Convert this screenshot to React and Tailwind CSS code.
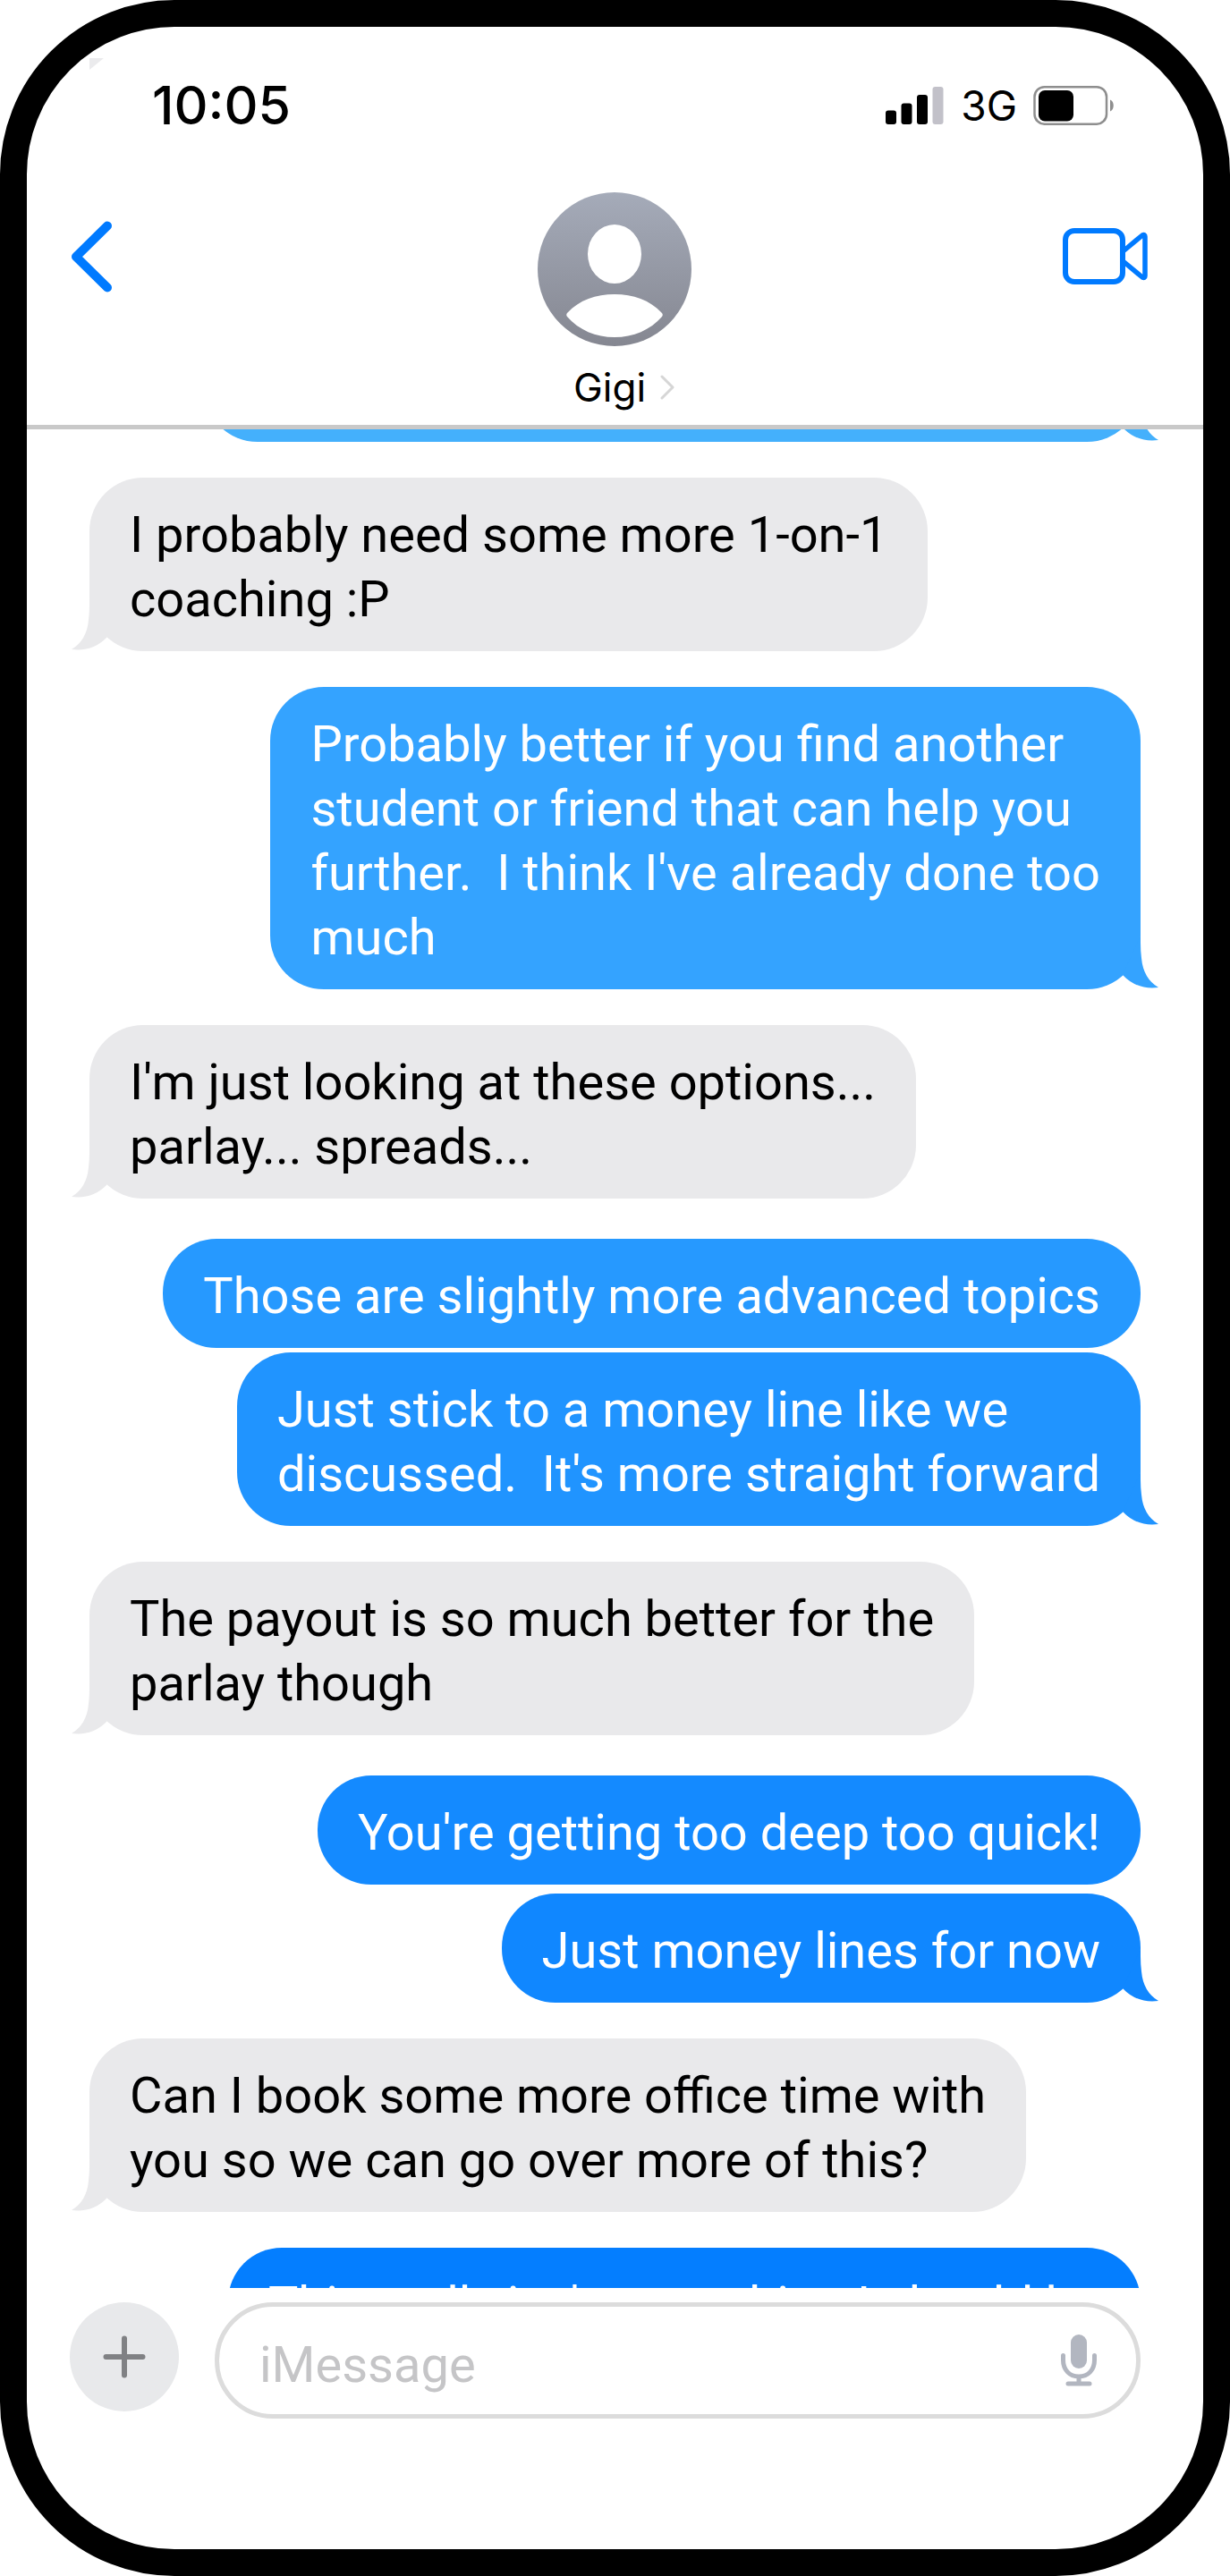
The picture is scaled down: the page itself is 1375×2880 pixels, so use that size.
import React, { useState } from 'react';
import { clsx } from 'clsx';

const messages = [
  { id: 1, mine: true, tail: true, className: '-mt-[108px] text-[#44b0fc]', text: 'Let me know how the first one goes ok' },
  { id: 2, mine: false, tail: true, className: 'mt-10', text: 'I probably need some more 1-on-1\ncoaching :P' },
  {
    id: 3,
    mine: true,
    tail: true,
    className: 'mt-10 text-[#34a3ff]',
    text: "Probably better if you find another\nstudent or friend that can help you\nfurther.  I think I've already done too\nmuch",
  },
  { id: 4, mine: false, tail: true, className: 'mt-10', text: "I'm just looking at these options...\nparlay... spreads..." },
  { id: 5, mine: true, tail: false, className: 'mt-[45px] text-[#2699ff]', text: 'Those are slightly more advanced topics' },
  {
    id: 6,
    mine: true,
    tail: true,
    className: 'mt-[5px] text-[#2094ff]',
    text: "Just stick to a money line like we\ndiscussed.  It's more straight forward",
  },
  { id: 7, mine: false, tail: true, className: 'mt-10', text: 'The payout is so much better for the\nparlay though' },
  { id: 8, mine: true, tail: false, className: 'mt-[45px] text-[#148aff]', text: "You're getting too deep too quick!" },
  { id: 9, mine: true, tail: true, className: 'mt-2.5 text-[#1087ff]', text: 'Just money lines for now' },
  { id: 10, mine: false, tail: true, className: 'mt-10', text: 'Can I book some more office time with\nyou so we can go over more of this?' },
  { id: 11, mine: true, tail: false, className: 'mt-10 text-[#047eff]', text: "This really isn't something I should be" },
];

const SignalIcon = () => (
  <svg viewBox="0 0 66 44" className="h-11 w-[66px]" aria-hidden="true">
    <rect x="0" y="27.5" width="12" height="15.5" rx="3" />
    <rect x="17.5" y="19.5" width="12" height="23.5" rx="3" />
    <rect x="35" y="10" width="12" height="33" rx="3" />
    <rect x="52.5" y="1" width="12" height="42" rx="3" fill="#c2c1c9" />
  </svg>
);

const BatteryIcon = () => (
  <svg viewBox="0 0 92 46" className="h-[46px] w-[92px]" aria-hidden="true">
    <rect x="1.5" y="2.2" width="80.5" height="41.5" rx="11" fill="none" stroke="#8e8e8e" strokeWidth="2.5" />
    <rect x="6" y="6" width="39" height="34.5" rx="7" />
    <path d="M86 16.500c5 1.500 5 11.500 0 13z" fill="#8e8e8e" />
  </svg>
);

const BackIcon = () => (
  <svg viewBox="0 0 46 80" className="h-20 w-[46px]" aria-hidden="true">
    <path d="M41 5.500L6 40l35 34.500" fill="none" stroke="#007aff" strokeWidth="10" strokeLinecap="round" strokeLinejoin="round" />
  </svg>
);

const VideoIcon = () => (
  <svg viewBox="0 0 96 64" className="h-16 w-24" fill="none" stroke="#007aff" strokeWidth="6" strokeLinejoin="round" aria-hidden="true">
    <rect x="3" y="3" width="64" height="57" rx="10" />
    <path d="M68 25.500L89 8q3-1.500 3 1.500v44q0 3-3 1.500L68 37.500" strokeWidth="5.500" />
  </svg>
);

const Avatar = () => (
  <svg viewBox="0 0 172 172" className="size-43" aria-hidden="true">
    <defs>
      <linearGradient id="avatarFill" x1="0" y1="0" x2="0" y2="1">
        <stop offset="0" stopColor="#a5abb9" />
        <stop offset="1" stopColor="#858791" />
      </linearGradient>
    </defs>
    <circle cx="86" cy="86" r="86" fill="url(#avatarFill)" />
    <ellipse cx="86" cy="69" rx="30" ry="33" fill="#fff" />
    <path d="M33 139c-1-1-1-3 0-4 14-15 32-21 53-21s39 6 53 21c1 1 1 3 0 4-13 15-32 23-53 23s-40-8-53-23z" fill="#fff" />
  </svg>
);

const MicIcon = () => (
  <svg viewBox="0 0 42 60" className="h-15 w-[42px]" aria-hidden="true">
    <rect x="12" y="1" width="18" height="38" rx="9" fill="#b2b6c0" />
    <path d="M3.500 24.500v5c0 11 7 18.500 17.500 18.500s17.500-7.500 17.500-18.500v-5M21 48v8M9 56h24" fill="none" stroke="#b2b6c0" strokeWidth="5" strokeLinecap="round" />
  </svg>
);

// Curved tip at the lower corner of the last bubble in a group
const Tail = ({ mine }) => (
  <svg
    viewBox="0 0 42 60"
    className={clsx('absolute bottom-0 h-15 w-[42px]', mine ? '-right-5 -scale-x-100' : '-left-5')}
    fill="currentColor"
    aria-hidden="true"
  >
    <path d="M20 0v8q0 9-1 17Q17 48 0 58q24 3 40-14z" />
  </svg>
);

// The bubble colour is set as text colour, so that the tail can share it
const Message = ({ message }) => {
  const { mine, tail, className, text } = message;
  return (
    <li
      className={clsx(
        'relative w-fit shrink-0 rounded-[60px] bg-current px-[45px] pt-7 pb-[22px]',
        mine ? 'self-end' : 'self-start text-[#e9e9eb]',
        className
      )}
    >
      {tail && <Tail mine={mine} />}
      <p className={clsx("font-['Roboto',sans-serif] text-[56px] leading-[72px] whitespace-pre-wrap", mine ? 'text-white' : 'text-black')}>
        {text}
      </p>
    </li>
  );
};

const App = () => {
  const [draft, setDraft] = useState('');

  return (
    <div className="relative flex h-screen flex-col overflow-hidden rounded-[195px] border-[30px] border-black bg-white font-['Inter',sans-serif] text-black">
      <svg viewBox="0 0 16 13" className="absolute top-[35px] left-[70px] h-[13px] w-4" aria-hidden="true">
        <path d="M0 0h16L0 13z" fill="#ebebed" />
      </svg>

      <header className="shrink-0 border-b-[5px] border-[#c9c9c9]">
        <div className="flex items-center justify-between pt-12 pr-[98px] pl-[140px]">
          <time className="text-[59px] leading-[80px] font-medium">10:05</time>
          <div className="flex items-center gap-[18px]">
            <SignalIcon />
            <span className="text-[46px] leading-[60px]">3G</span>
            <BatteryIcon />
          </div>
        </div>
        <div className="grid grid-cols-3 items-start px-[49px] pt-[57px] pb-3">
          <button type="button" aria-label="Back" className="mt-8 justify-self-start">
            <BackIcon />
          </button>
          <button type="button" className="flex flex-col items-center justify-self-center">
            <Avatar />
            <span className="mt-4 flex items-center gap-4 pl-5 text-[44px] leading-[60px]">
              Gigi
              <svg viewBox="0 0 16 28" className="h-7 w-4" aria-hidden="true">
                <path d="M2 2l12 12L2 26" fill="none" stroke="#d6d6d6" strokeWidth="3" strokeLinecap="round" strokeLinejoin="round" />
              </svg>
            </span>
          </button>
          <button type="button" aria-label="Video call" className="mt-10 mr-3 justify-self-end">
            <VideoIcon />
          </button>
        </div>
      </header>

      <main className="min-h-0 flex-1 overflow-hidden">
        <ul className="flex flex-col px-[70px]">
          {messages.map((message) => (
            <Message key={message.id} message={message} />
          ))}
        </ul>
      </main>

      <form className="flex shrink-0 items-start gap-10 pt-4 pr-[70px] pb-[146px] pl-12" onSubmit={(e) => e.preventDefault()}>
        <button type="button" aria-label="Add attachment" className="flex size-[122px] shrink-0 items-center justify-center rounded-full bg-[#e8e9eb]">
          <svg viewBox="0 0 48 48" className="size-12" aria-hidden="true">
            <path d="M24 3.500v41M3.500 24h41" stroke="#808184" strokeWidth="6" strokeLinecap="round" />
          </svg>
        </button>
        <div className="flex h-[130px] min-w-0 flex-1 items-center rounded-[65px] border-[5px] border-[#dcdcdc] pr-[43px] pl-[45px]">
          <input
            type="text"
            aria-label="iMessage"
            placeholder="iMessage"
            value={draft}
            onChange={(e) => setDraft(e.target.value)}
            className="min-w-0 flex-1 bg-transparent pt-2.5 font-['Roboto',sans-serif] text-[56px] leading-[72px] outline-none placeholder:text-[#c5c5c7]"
          />
          <button type="button" aria-label="Dictate">
            <MicIcon />
          </button>
        </div>
      </form>
    </div>
  );
};

export default App;
